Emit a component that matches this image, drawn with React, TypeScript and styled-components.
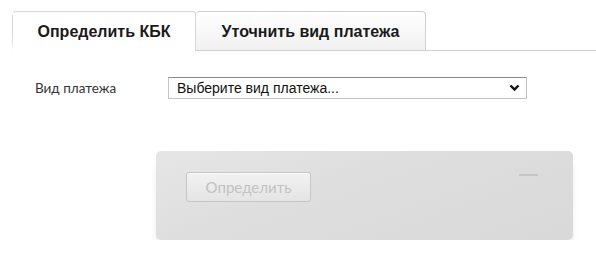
import React from "react";
import styled, { createGlobalStyle } from "styled-components";

const Global = createGlobalStyle`
  html, body { margin: 0; padding: 0; background: #fff; }
  body { font-family: "Liberation Sans", Arial, sans-serif; color: #222; }
`;

const Page = styled.div`
  padding: 11px 0 0 12px;
  width: 596px;
  box-sizing: border-box;
`;

const TabBar = styled.div`
  display: flex;
  align-items: stretch;
  height: 40px;
`;

const Tab = styled.div<{ $active?: boolean; $width: number }>`
  width: ${(p) => p.$width}px;
  box-sizing: border-box;
  display: flex;
  align-items: center;
  justify-content: center;
  font-family: "Liberation Sans", Arial, sans-serif;
  font-weight: bold;
  font-size: 16px;
  color: #1a1a1a;
  border-radius: 4px 4px 0 0;
  padding-top: 1px;
  ${(p) =>
    p.$active
      ? `
    background: #fff;
    border-top: 1px solid #d6d6d6;
    border-left: 1px solid transparent;
    border-right: 1px solid #d6d6d6;
    position: relative;
    &::before {
      content: "";
      position: absolute;
      left: -1px;
      top: 3px;
      bottom: 0;
      width: 1px;
      background: linear-gradient(#d6d6d6, #d6d6d6 60%, #fff);
    }
  `
      : `
    background: linear-gradient(#ffffff, #f1f1f1);
    border: 1px solid #cfcfcf;
    border-left: none;
  `}
`;

const TabFill = styled.div`
  flex: 1;
  border-bottom: 1px solid #cfcfcf;
`;

const FormRow = styled.div`
  display: flex;
  align-items: center;
  margin-top: 26px;
  padding-left: 23px;
`;

const Label = styled.div`
  width: 133px;
  font-family: Lato, "Open Sans", sans-serif;
  font-size: 13.5px;
  color: #333;
`;

const SelectBox = styled.div`
  width: 359px;
  height: 22px;
  box-sizing: border-box;
  border: 1px solid #c4c4c4;
  border-top-color: #8c8c8c;
  display: flex;
  align-items: center;
  justify-content: space-between;
  padding: 0 6px 0 8px;
  font-family: "Liberation Sans", Arial, sans-serif;
  font-size: 14px;
  color: #111;
  background: #fff;
`;

const PanelWrap = styled.div`
  padding-left: 144px;
  margin-top: 52px;
`;

const Panel = styled.div`
  width: 417px;
  height: 89px;
  box-sizing: border-box;
  border-radius: 5px;
  background: linear-gradient(160deg, #e6e6e6 0%, #dedede 40%, #d9d9d9 100%);
  box-shadow: 0 10px 10px -4px rgba(0, 0, 0, 0.2);
  display: flex;
  justify-content: space-between;
  align-items: flex-start;
  padding: 21px 35px 0 30px;
`;

const Button = styled.div`
  width: 125px;
  height: 30px;
  box-sizing: border-box;
  border: 1px solid #c6c6c6;
  border-radius: 3px;
  background: linear-gradient(#f2f2f2, #e4e4e4);
  box-shadow: inset 0 1px 0 #fafafa;
  display: flex;
  align-items: center;
  justify-content: center;
  font-family: Lato, "Open Sans", sans-serif;
  font-size: 15px;
  color: #c2c2c2;
`;

const Dash = styled.div`
  width: 19px;
  height: 2px;
  margin-top: 2px;
  background: #c6c6c6;
`;

export default function App() {
  return (
    <>
      <Global />
      <Page>
        <TabBar>
          <Tab $active $width={184}>Определить КБК</Tab>
          <Tab $width={230}>Уточнить вид платежа</Tab>
          <TabFill />
        </TabBar>
        <FormRow>
          <Label>Вид платежа</Label>
          <SelectBox>
            <span>Выберите вид платежа...</span>
            <svg width="11" height="8" viewBox="0 0 11 8">
              <path d="M1.5 1.5 L5.5 5.5 L9.5 1.5" fill="none" stroke="#111" strokeWidth="2.4" />
            </svg>
          </SelectBox>
        </FormRow>
        <PanelWrap>
          <Panel>
            <Button>Определить</Button>
            <Dash />
          </Panel>
        </PanelWrap>
      </Page>
    </>
  );
}
